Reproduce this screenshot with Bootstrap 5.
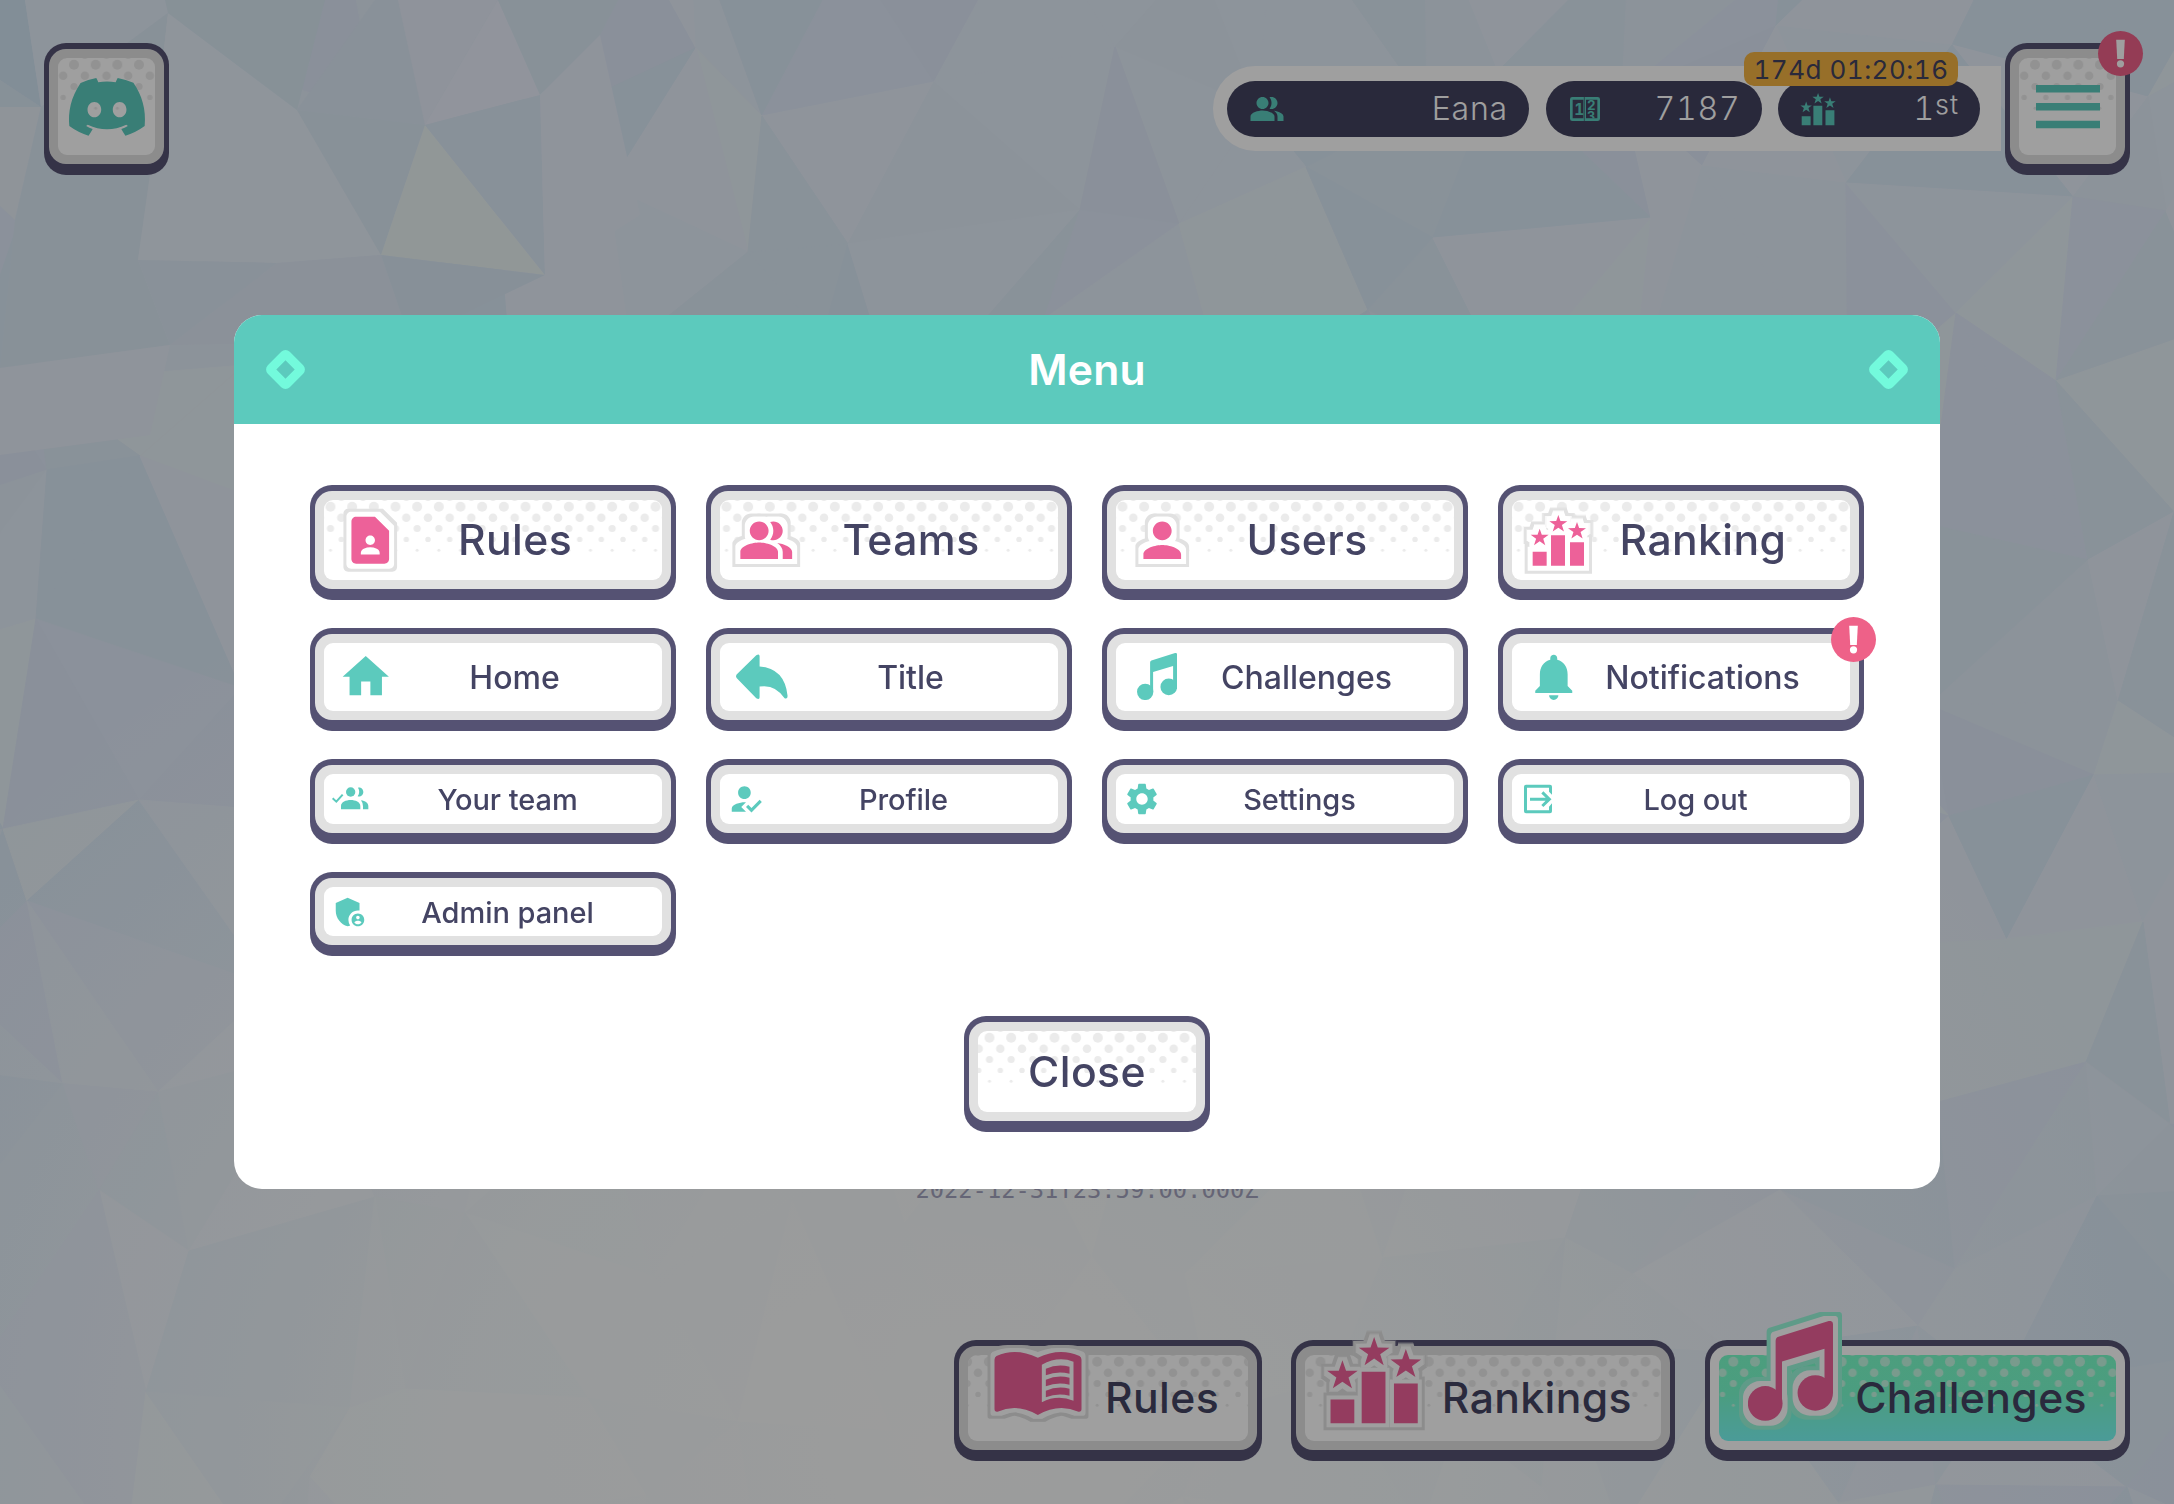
<!DOCTYPE html>
<html lang="en">
<head>
<meta charset="utf-8">
<meta name="viewport" content="width=device-width, initial-scale=1">
<title>Menu</title>
<link href="https://cdn.jsdelivr.net/npm/bootstrap@5.3.0/dist/css/bootstrap.min.css" rel="stylesheet">
<style>
  :root { --teal: #5ccabd; --ink: #555273; --label: #444463; --pill: #42425f; --pink: #ed6199; --ring: #e1e1e1; }
  body { font-family: Inter, "Liberation Sans", sans-serif; color: var(--label); background: #e4ebf6; overflow: hidden; }
  .page-shell { height: 1504px; }
  .poly-bg { position: absolute; inset: 0; width: 100%; height: 100%; z-index: -1; }

  /* chunky push button: dark rim, grey ring, white face */
  .key { padding: 6px 5px 11px; border: 0; border-radius: 22px; background: var(--ink); position: relative; text-decoration: none; color: var(--label); display: block; }
  .key-ring { padding: 9px; border-radius: 17px; background: var(--ring); }
  .key-face { position: relative; background: #fff; border-radius: 9px; font-weight: 500; font-size: 42.67px; line-height: 1; letter-spacing: .4px; }
  .key-label { position: relative; white-space: nowrap; padding-top: 1px; }
  .tone { position: absolute; inset: 0; width: 100%; height: 100%; border-radius: 9px; overflow: hidden; }
  .ico { display: block; fill: currentColor; flex: none; overflow: visible; position: relative; }

  .key-lg .key-face { height: 80px; }
  .key-md .key-face { height: 68px; font-size: 32px; letter-spacing: 0; }
  .key-md .key-label { padding-top: 2px; }
  .key-sm .key-face { height: 50px; font-size: 29px; letter-spacing: -.05px; }
  .key-xs .key-face { height: 49px; }
  .key-lg .ico { width: 56.5px; height: 56.5px; margin: 0 -30px 0 17.5px; color: var(--pink); filter: url(#sticker); }
  .key-md .ico { width: 55.5px; height: 55.5px; margin: 0 -26px 0 13.5px; color: var(--teal); }
  .key-sm .ico { width: 38px; height: 38px; margin: 0 -16px 0 7px; color: var(--teal); }

  .key-square .key-face { width: 97px; height: 97px; color: var(--teal); }
  .key-close .key-face { width: 218px; height: 81px; }

  .key-foot .key-face { height: 86px; padding-right: 29px; }
  .key-foot .ico { position: absolute; width: 96px; height: 96px; color: var(--pink); filter: url(#stickerFoot); }
  .key-hot .key-ring { background: #fff; }
  .key-hot .key-face { background: linear-gradient(#7afdca 0, #79fccd 45%, #78f9f4 100%); }
  .key-foot.key-hot .ico { width: 85px; height: 100px; filter: url(#stickerHot); }

  .top-bar { padding: 43px 44px 0; }
  .stat-bar { height: 85px; padding: 0 21px 0 14px; margin: 23px 4px 0 0; gap: 16.5px; background: #fff; border-radius: 43px 0 0 43px; position: relative; }
  .stat { height: 56px; border-radius: 28px; background: var(--pill); color: #fff; font-size: 32px; font-weight: 300; line-height: 1; padding: 0 21px 0 22px; letter-spacing: .8px; font-variant-numeric: tabular-nums; }
  .stat .ico { color: var(--teal); }
  .stat sup { font-size: 27px; top: -.2em; letter-spacing: 1px; }
  .timer { position: absolute; left: 531px; top: -14px; width: 214px; height: 34px; border-radius: 10px; background: #f2b343; color: var(--pill); font-size: 26px; line-height: 35px; letter-spacing: .5px; font-variant-numeric: tabular-nums; }
  .alert-dot { position: absolute; width: 45px; height: 45px; border-radius: 50%; background: #ee6188; color: #fff; z-index: 2; }

  .stamp { font-family: "DejaVu Sans Mono", monospace; font-size: 23.75px; line-height: 28px; color: #a3a3bd; margin-bottom: 136px; }
  .foot-bar { padding: 0 44px 43px; gap: 29px; }

  .modal-backdrop.veil { --bs-backdrop-opacity: .376; }
  .menu-dialog { --bs-modal-width: 1706px; --bs-modal-margin: 0; }
  .menu-panel { height: 874px; border: 0; border-radius: 28px; overflow: hidden; }
  .menu-head { height: 109px; padding: 0 36px; background: var(--teal); color: #fff; border: 0; border-radius: 0; }
  .menu-head h1 { font-size: 42.67px; font-weight: 600; letter-spacing: .2px; }
  .gem { width: 31px; height: 31px; border: 9px solid #73fadc; border-radius: 6px; transform: rotate(45deg); }
  .menu-main { padding: 61px 76px 57px; }
  .menu-grid { display: grid; grid-template-columns: repeat(4, 366px); column-gap: 30px; row-gap: 28px; }
</style>
<script src="https://cdn.jsdelivr.net/npm/bootstrap@5.3.0/dist/js/bootstrap.bundle.min.js"></script>
</head>
<body>

<svg width="0" height="0" class="position-absolute">
  <defs>
    <filter id="sticker" x="-30%" y="-30%" width="160%" height="160%" color-interpolation-filters="sRGB">
      <feMorphology in="SourceAlpha" operator="dilate" radius="8" result="a"/><feFlood flood-color="#e1e1e1"/><feComposite in2="a" operator="in" result="o"/>
      <feMorphology in="SourceAlpha" operator="dilate" radius="5" result="b"/><feFlood flood-color="#fff"/><feComposite in2="b" operator="in" result="i"/>
      <feMerge><feMergeNode in="o"/><feMergeNode in="i"/><feMergeNode in="SourceGraphic"/></feMerge>
    </filter>
    <filter id="stickerFoot" x="-30%" y="-30%" width="160%" height="160%" color-interpolation-filters="sRGB">
      <feMorphology in="SourceAlpha" operator="dilate" radius="7" result="a"/><feFlood flood-color="#e1e1e1"/><feComposite in2="a" operator="in" result="o"/>
      <feMorphology in="SourceAlpha" operator="dilate" radius="4" result="b"/><feFlood flood-color="#fff"/><feComposite in2="b" operator="in" result="i"/>
      <feMerge><feMergeNode in="o"/><feMergeNode in="i"/><feMergeNode in="SourceGraphic"/></feMerge>
    </filter>
    <filter id="stickerHot" x="-30%" y="-30%" width="160%" height="160%" color-interpolation-filters="sRGB">
      <feMorphology in="SourceAlpha" operator="dilate" radius="9" result="a"/><feFlood flood-color="#98f8da"/><feComposite in2="a" operator="in" result="o"/>
      <feMorphology in="SourceAlpha" operator="dilate" radius="5" result="b"/><feFlood flood-color="#fff"/><feComposite in2="b" operator="in" result="i"/>
      <feMerge><feMergeNode in="o"/><feMergeNode in="i"/><feMergeNode in="SourceGraphic"/></feMerge>
    </filter>
    <g id="dotcol"><circle cx="10.83" cy="5.8" r="5.1"/><circle cy="16.7" r="5"/><circle cx="21.667" cy="16.7" r="5"/><circle cx="10.83" cy="27.7" r="4.3"/><circle cy="38.5" r="3.6"/><circle cx="21.667" cy="38.5" r="3.6"/><circle cx="10.83" cy="49.4" r="2.7"/><circle cy="60.3" r="1.5"/><circle cx="21.667" cy="60.3" r="1.5"/></g>
    <pattern id="pGray" x="-10.83" y="-10" width="21.667" height="80" patternUnits="userSpaceOnUse"><use href="#dotcol" fill="#ebebeb"/></pattern>
    <pattern id="pHot" x="-10.83" y="-10" width="21.667" height="80" patternUnits="userSpaceOnUse"><use href="#dotcol" fill="#c2f8e2"/></pattern>
    <g id="toneGray"><rect x="-300" y="-10" width="600" height="79" fill="url(#pGray)"/></g>
    <g id="toneHot"><rect x="-300" y="-10" width="600" height="79" fill="url(#pHot)"/></g>
    <radialGradient id="glow" gradientUnits="userSpaceOnUse" cx="950" cy="1450" r="1250" gradientTransform="translate(0 300) scale(1 .793)">
      <stop offset="0" stop-color="#fcfcfb" stop-opacity=".95"/><stop offset=".4" stop-color="#fafcfb" stop-opacity=".75"/><stop offset="1" stop-color="#f4f8fb" stop-opacity="0"/>
    </radialGradient>

    <symbol id="i-people" viewBox="0 0 24 24"><path d="M16.67 13.13C18.04 14.06 19 15.32 19 17v3h4v-3c0-2.18-3.57-3.47-6.33-3.87zM15 12c2.21 0 4-1.79 4-4s-1.79-4-4-4c-.47 0-.91.1-1.33.24C14.5 5.27 15 6.58 15 8s-.5 2.73-1.33 3.76c.42.14.86.24 1.33.24zM9 12c2.21 0 4-1.79 4-4s-1.79-4-4-4-4 1.79-4 4 1.79 4 4 4zm0 1c-2.67 0-8 1.34-8 4v3h16v-3c0-2.66-5.33-4-8-4z"/></symbol>
    <symbol id="i-podium" viewBox="147 127 169.5 169.5"><path d="M155 246h42v42h-42zM210 197h42v91h-42zM267 218h42v70h-42z"/><path id="st" d="M176 177l6.4 18.3 20.6.3-16.3 11.7 6.2 19.2L176 215l-16.9 11.5 6.2-19.2L149 195.600l20.600-.3z"/><use href="#st" x="56" y="-41"/><use href="#st" x="112" y="-20"/></symbol>
    <symbol id="i-note" viewBox="141 552 120 141"><path d="M180 580q0-5 4-6l71-22q6-1 6 4v97h-12v-62l-60 18v59h-9z"/><circle cx="165.300" cy="668.300" r="24.500"/><circle cx="236" cy="653.500" r="25"/></symbol>
  </defs>
</svg>

<div class="page-shell d-flex flex-column position-relative">
  <svg class="poly-bg" viewBox="0 0 2174 1504" preserveAspectRatio="none">
    <g id="mesh"></g>
    <rect width="2174" height="1504" fill="url(#glow)"/>
    <g id="corner">
      <path fill="#d0e4f3" d="M0 0h25l16 107L0 80z"/><path fill="#e3edf9" d="M25 0h143v13L41 107z"/>
      <path fill="#e5eef6" d="M0 107l41 0-26 113-15-14z"/><path fill="#d9e8f4" d="M0 80l41 27H0z"/>
      <path fill="#dbe9f4" d="M41 107L168 13l-18 162-12 85 32 85L0 368l15-148z"/>
      <path fill="#e6eff8" d="M168 13l129 97 84 145-104 8-139-3 12-85z"/>
      <path fill="#d8e8f3" d="M168 13L165 0h160l-28 110z"/><path fill="#dce8f6" d="M325 0h73l27 125-128-15 78-110z"/>
      <path fill="#e5ecf8" d="M398 0h100l-73 125z"/><path fill="#e9eefa" d="M498 0l42 95-115 30z"/>
      <path fill="#dae9f4" d="M297 110l128 15-44 130z"/><path fill="#e9f2f3" d="M425 125l120 150-164-20z"/>
      <path fill="#dae8f5" d="M425 125l115-30 5 180z"/><path fill="#dae9f4" d="M498 0h120l-18 35-60 60z"/>
      <path fill="#e6edf9" d="M540 95l60-60 40 180-95 60z"/>
      <path fill="#dce9f5" d="M138 260l139 3-107 82z"/><path fill="#dfe8f6" d="M277 263l104-8 29 85-240 5z"/>
      <path fill="#d9e7f4" d="M381 255l164 20-135 65z"/><path fill="#e6edf8" d="M0 368l170-23-20 90-150 20z"/>
    </g>
  </svg>

  <header class="top-bar d-flex align-items-start">
    <a class="key key-square" href="#" aria-label="Discord"><div class="key-ring"><div class="key-face d-flex align-items-center justify-content-center">
      <svg class="tone"><use href="#toneGray" x="50%"/></svg>
      <svg class="ico" width="76" height="57.700" viewBox="0 0 127.140 96.360"><path d="M107.700 8.070A105.150 105.150 0 0 0 81.470 0a72.060 72.060 0 0 0-3.360 6.830 97.680 97.680 0 0 0-29.110 0A72.370 72.370 0 0 0 45.640 0a105.890 105.890 0 0 0-26.250 8.090C2.790 32.650-1.710 56.600.54 80.210a105.730 105.730 0 0 0 32.170 16.150 77.700 77.700 0 0 0 6.890-11.110 68.420 68.420 0 0 1-10.850-5.180c.91-.66 1.800-1.340 2.660-2a75.570 75.570 0 0 0 64.320 0c.87.71 1.760 1.390 2.660 2a68.680 68.680 0 0 1-10.870 5.190 77 77 0 0 0 6.890 11.100 105.250 105.250 0 0 0 32.190-16.140c2.640-27.380-4.510-51.110-18.900-72.150zM42.450 65.690C36.180 65.690 31 60 31 53s5-12.740 11.430-12.740S54 46 53.890 53s-5.050 12.690-11.440 12.690zm42.240 0c-6.280 0-11.440-5.690-11.440-12.690s5-12.740 11.440-12.740S96.230 46 96.120 53s-5.040 12.690-11.430 12.690z"/></svg>
    </div></div></a>

    <div class="stat-bar d-flex align-items-center ms-auto">
      <div class="stat d-flex align-items-center justify-content-between" style="width:302px"><svg class="ico" width="36" height="36"><use href="#i-people"/></svg><span>Eana</span></div>
      <div class="stat d-flex align-items-center justify-content-between" style="width:216px">
        <svg class="ico" width="34" height="34" viewBox="1134 216 102 102"><path fill-rule="evenodd" d="M1147 231h76q7 0 7 7v58q0 7-7 7h-76q-7 0-7-7v-58q0-7 7-7zm1 8v56h32v-56zm40 0v56h34v-56z"/><path d="M1183 231v72" stroke="#42425f" stroke-width="2"/><svg x="1140" y="239" width="90" height="56"><g font-family="Inter" font-weight="700" font-size="46"><text x="13" y="46">1</text><text x="51" y="30" font-size="40">2</text><text x="51" y="65" font-size="38">3</text></g></svg></svg>
        <span>7187</span></div>
      <div class="stat d-flex align-items-center justify-content-between" style="width:202px"><svg class="ico" width="36" height="36"><use href="#i-podium"/></svg><span>1<sup>st</sup></span></div>
      <div class="timer text-center">174d 01:20:16</div>
    </div>

    <a class="key key-square" href="#" aria-label="Menu"><div class="key-ring"><div class="key-face d-flex align-items-center justify-content-center">
      <svg class="tone"><use href="#toneGray" x="50%"/></svg>
      <svg class="ico" width="64" height="44" viewBox="0 0 64 44"><path d="M0 0h64v7.500H0zM0 17.900h64v7.500H0zM0 35.800h64v7.500H0z"/></svg>
    </div></div>
      <span class="alert-dot" style="left:93px;top:-12px"><svg class="d-block" viewBox="0 0 45 45" fill="#fff"><path d="M18.200 8.700h8.600l-1 19.300h-6.600z"/><circle cx="22.500" cy="32.800" r="3.600"/></svg></span>
    </a>
  </header>

  <main class="flex-grow-1 d-flex align-items-end justify-content-center"><div class="stamp">2022-12-31T23:59:00.000Z</div></main>

  <footer class="foot-bar d-flex justify-content-end">
    <a class="key key-foot" href="#" style="width:308px"><div class="key-ring"><div class="key-face d-flex align-items-center justify-content-end">
      <svg class="tone"><use href="#toneGray" x="50%"/></svg>
      <svg class="ico" style="left:21.500px;top:-19.700px" viewBox="178.500 106 288 288"><path fill-rule="evenodd" d="M192 180q0-7 6-11 58-26 124 5 66-31 125-5 6 4 6 11v148q0 9-9 8-60-26-122 10-62-36-121-10-9 1-9-8zM334 195v113q46-24 95-5V186q-46-18-95 9z"/><path d="M346 207q34-15 71-6v21q-37-9-71 5zM346 240q34-15 71-6v21q-37-9-71 5zM346 273q34-15 71-6v21q-37-9-71 5z"/></svg>
      <span class="key-label">Rules</span></div></div></a>
    <a class="key key-foot" href="#" style="width:384px"><div class="key-ring"><div class="key-face d-flex align-items-center justify-content-end">
      <svg class="tone"><use href="#toneGray" x="50%"/></svg>
      <svg class="ico" style="left:21.200px;top:-23.500px"><use href="#i-podium"/></svg>
      <span class="key-label">Rankings</span></div></div></a>
    <a class="key key-foot key-hot" href="#" style="width:425px;margin-left:1px"><div class="key-ring"><div class="key-face d-flex align-items-center justify-content-end">
      <svg class="tone"><use href="#toneHot" x="50%"/></svg>
      <svg class="ico" style="left:29px;top:-34.300px"><use href="#i-note"/></svg>
      <span class="key-label">Challenges</span></div></div></a>
  </footer>
</div>

<div class="modal-backdrop veil show"></div>
<div class="modal d-block" tabindex="-1" role="dialog">
  <div class="modal-dialog modal-dialog-centered menu-dialog mx-auto my-0 vh-100">
    <div class="modal-content menu-panel">
      <div class="modal-header menu-head d-flex align-items-center justify-content-between">
        <span class="gem"></span><h1 class="m-0">Menu</h1><span class="gem"></span>
      </div>
      <div class="modal-body menu-main d-flex flex-column align-items-center justify-content-between">
        <div class="menu-grid">
          <a class="key key-lg" href="#"><div class="key-ring"><div class="key-face d-flex align-items-center"><svg class="tone"><use href="#toneGray" x="50%"/></svg>
            <svg class="ico" viewBox="0 0 24 24"><path d="M14 2H6c-1.100 0-1.990.9-1.990 2L4 20c0 1.100.89 2 1.990 2H18c1.100 0 2-.9 2-2V8l-6-6zm-2 8c1.100 0 2 .9 2 2s-.9 2-2 2-2-.9-2-2 .9-2 2-2zm4 8H8v-.57c0-.81.48-1.530 1.220-1.850a6.950 6.950 0 0 1 5.560 0A2.010 2.010 0 0 1 16 17.430V18z"/></svg>
            <span class="key-label flex-grow-1 text-center">Rules</span></div></div></a>
          <a class="key key-lg" href="#"><div class="key-ring"><div class="key-face d-flex align-items-center"><svg class="tone"><use href="#toneGray" x="50%"/></svg>
            <svg class="ico"><use href="#i-people"/></svg>
            <span class="key-label flex-grow-1 text-center">Teams</span></div></div></a>
          <a class="key key-lg" href="#"><div class="key-ring"><div class="key-face d-flex align-items-center"><svg class="tone"><use href="#toneGray" x="50%"/></svg>
            <svg class="ico" viewBox="0 0 24 24"><path d="M12 12c2.210 0 4-1.790 4-4s-1.790-4-4-4-4 1.790-4 4 1.790 4 4 4zm0 2c-2.670 0-8 1.340-8 4v2h16v-2c0-2.660-5.330-4-8-4z"/></svg>
            <span class="key-label flex-grow-1 text-center">Users</span></div></div></a>
          <a class="key key-lg" href="#"><div class="key-ring"><div class="key-face d-flex align-items-center"><svg class="tone"><use href="#toneGray" x="50%"/></svg>
            <svg class="ico"><use href="#i-podium"/></svg>
            <span class="key-label flex-grow-1 text-center">Ranking</span></div></div></a>

          <a class="key key-md" href="#"><div class="key-ring"><div class="key-face d-flex align-items-center">
            <svg class="ico" viewBox="0 0 24 24"><path d="M10 20v-6h4v6h5v-8h3L12 3 2 12h3v8z"/></svg>
            <span class="key-label flex-grow-1 text-center">Home</span></div></div></a>
          <a class="key key-md" href="#"><div class="key-ring"><div class="key-face d-flex align-items-center">
            <svg class="ico" viewBox="132.200 539.200 166.500 166.500"><path d="M140 616l59-58q10-6 10 3v31q75 5 84 88 0 10-9 7-29-43-75-35v32q0 9-10 3l-59-61q-4-5 0-10z"/></svg>
            <span class="key-label flex-grow-1 text-center">Title</span></div></div></a>
          <a class="key key-md" href="#"><div class="key-ring"><div class="key-face d-flex align-items-center">
            <svg class="ico" viewBox="119.700 539.700 166.500 166.500"><svg x="141" y="552" width="120" height="141"><use href="#i-note"/></svg></svg>
            <span class="key-label flex-grow-1 text-center">Challenges</span></div></div></a>
          <a class="key key-md" href="#"><div class="key-ring"><div class="key-face d-flex align-items-center">
            <svg class="ico" viewBox="0 0 24 24"><path d="M12 22c1.100 0 2-.9 2-2h-4c0 1.100.89 2 2 2zm6-6v-5c0-3.070-1.640-5.640-4.500-6.320V4c0-.83-.67-1.500-1.500-1.500s-1.500.67-1.500 1.500v.68C7.630 5.360 6 7.920 6 11v5l-2 2v1h16v-1l-2-2z"/></svg>
            <span class="key-label flex-grow-1 text-center">Notifications</span></div></div>
            <span class="alert-dot" style="left:333px;top:-11px"><svg class="d-block" viewBox="0 0 45 45" fill="#fff"><path d="M18.200 8.700h8.600l-1 19.300h-6.600z"/><circle cx="22.500" cy="32.800" r="3.600"/></svg></span></a>

          <a class="key key-sm" href="#"><div class="key-ring"><div class="key-face d-flex align-items-center">
            <svg class="ico" viewBox="125 510 114 114"><path d="M155 598v-10c0-12 15-18 29-18s29 6 29 18v10zM206 533c9-3 16 5 16 13s-8 16-17 13c6-8 6-18 1-26zM215 571c13 2 22 8 22 18v9h-16v-9q0-10-6-18z"/><circle cx="184" cy="546" r="14"/><path d="M130 565l11 10 19-21" fill="none" stroke="currentColor" stroke-width="6"/></svg>
            <span class="key-label flex-grow-1 text-center">Your team</span></div></div></a>
          <a class="key key-sm" href="#"><div class="key-ring"><div class="key-face d-flex align-items-center">
            <svg class="ico" viewBox="0 0 24 24"><path d="M9 17l3-2.940c-.39-.04-.68-.06-1-.06-2.670 0-8 1.340-8 4v2h9l-3-3zm2-5c2.210 0 4-1.790 4-4s-1.790-4-4-4-4 1.790-4 4 1.790 4 4 4zM15.470 20.500L12 17l1.400-1.410 2.070 2.080 5.130-5.170 1.400 1.410z"/></svg>
            <span class="key-label flex-grow-1 text-center">Profile</span></div></div></a>
          <a class="key key-sm" href="#"><div class="key-ring"><div class="key-face d-flex align-items-center">
            <svg class="ico" viewBox="0 0 24 24"><path d="M19.140 12.940c.04-.3.060-.61.060-.94 0-.32-.02-.64-.07-.94l2.030-1.580a.49.49 0 0 0 .12-.61l-1.920-3.320a.488.488 0 0 0-.59-.22l-2.390.96c-.5-.38-1.030-.7-1.620-.94l-.36-2.540a.484.484 0 0 0-.48-.41h-3.840c-.24 0-.43.17-.47.41l-.36 2.540c-.59.24-1.130.57-1.620.94l-2.390-.96c-.22-.08-.47 0-.59.22L2.740 8.870c-.12.21-.08.47.12.61l2.030 1.580c-.05.3-.09.63-.09.94s.02.64.07.94l-2.030 1.580a.49.49 0 0 0-.12.61l1.920 3.320c.12.22.37.29.59.22l2.390-.96c.5.38 1.030.7 1.620.94l.36 2.540c.05.24.24.41.48.41h3.840c.24 0 .44-.17.47-.41l.36-2.540c.59-.24 1.130-.56 1.620-.94l2.390.96c.22.08.47 0 .59-.22l1.920-3.320c.12-.22.07-.47-.12-.61l-2.010-1.580zM12 15.600c-1.980 0-3.600-1.620-3.600-3.600s1.620-3.600 3.600-3.600 3.600 1.620 3.600 3.600-1.620 3.600-3.600 3.600z"/></svg>
            <span class="key-label flex-grow-1 text-center">Settings</span></div></div></a>
          <a class="key key-sm" href="#"><div class="key-ring"><div class="key-face d-flex align-items-center">
            <svg class="ico" viewBox="117 928 114 114"><path fill-rule="evenodd" d="M138 942h72q6 0 6 6v24l-9-9v-12h-66v68h66v-11l9-10v24q0 6-6 6h-72q-6 0-6-6v-74q0-6 6-6z"/><path d="M150 985.500h56M187 965l21 20.500-21 20.500" fill="none" stroke="currentColor" stroke-width="9"/></svg>
            <span class="key-label flex-grow-1 text-center">Log out</span></div></div></a>

          <a class="key key-sm key-xs" href="#"><div class="key-ring"><div class="key-face d-flex align-items-center">
            <svg class="ico" viewBox="0 0 24 24"><path fill-rule="evenodd" d="M17 11c.34 0 .67.04 1 .09V6.270L10.500 3 3 6.270v4.910c0 4.540 3.200 8.790 7.500 9.820.55-.13 1.080-.32 1.600-.55A5.973 5.973 0 0 1 11 17c0-3.310 2.690-6 6-6zM17 13c-2.210 0-4 1.790-4 4s1.790 4 4 4 4-1.790 4-4-1.790-4-4-4zm0 1.380c.62 0 1.120.51 1.120 1.120s-.51 1.120-1.120 1.120-1.120-.51-1.120-1.120.5-1.120 1.120-1.120zm0 5.370c-.93 0-1.740-.46-2.240-1.170.05-.72 1.510-1.080 2.240-1.080s2.190.36 2.240 1.080c-.5.71-1.310 1.170-2.240 1.170z"/></svg>
            <span class="key-label flex-grow-1 text-center">Admin panel</span></div></div></a>
        </div>
        <button class="key key-close" type="button"><div class="key-ring"><div class="key-face d-flex align-items-center justify-content-center"><svg class="tone"><use href="#toneGray" x="50%"/></svg><span class="key-label">Close</span></div></div></button>
      </div>
    </div>
  </div>
</div>

<script>
  // Low-poly wallpaper: a jittered triangle mesh in pale blues.
  (function () {
    var seed = 41, step = 145, cols = 17, rows = 12, pts = [], out = '';
    function rnd() { seed = (seed * 16807) % 2147483647; return seed / 2147483647; }
    var tones = ['#d9e8f6', '#dde7f7', '#e3edf8', '#e6eef9', '#e0ecf7', '#dceaf6', '#e6f0f7', '#dfe9f8'];
    for (var r = 0; r <= rows; r++) for (var c = 0; c <= cols; c++)
      pts.push([((c - .5) * step + (r % 2) * 60 + (rnd() - .5) * 110 - 60).toFixed(0), ((r - .5) * step + (rnd() - .5) * 110).toFixed(0)]);
    for (r = 0; r < rows; r++) for (c = 0; c < cols; c++) {
      var a = pts[r * (cols + 1) + c], b = pts[r * (cols + 1) + c + 1], d = pts[(r + 1) * (cols + 1) + c], e = pts[(r + 1) * (cols + 1) + c + 1];
      var tri = r % 2 ? [[a, b, e], [a, e, d]] : [[a, b, d], [b, e, d]];
      tri.forEach(function (t) {
        var k = tones[Math.floor(rnd() * tones.length)];
        out += '<polygon points="' + t.join(' ') + '" fill="' + k + '" stroke="' + k + '"/>';
      });
    }
    document.getElementById('mesh').innerHTML = out;
  })();
</script>
</body>
</html>
